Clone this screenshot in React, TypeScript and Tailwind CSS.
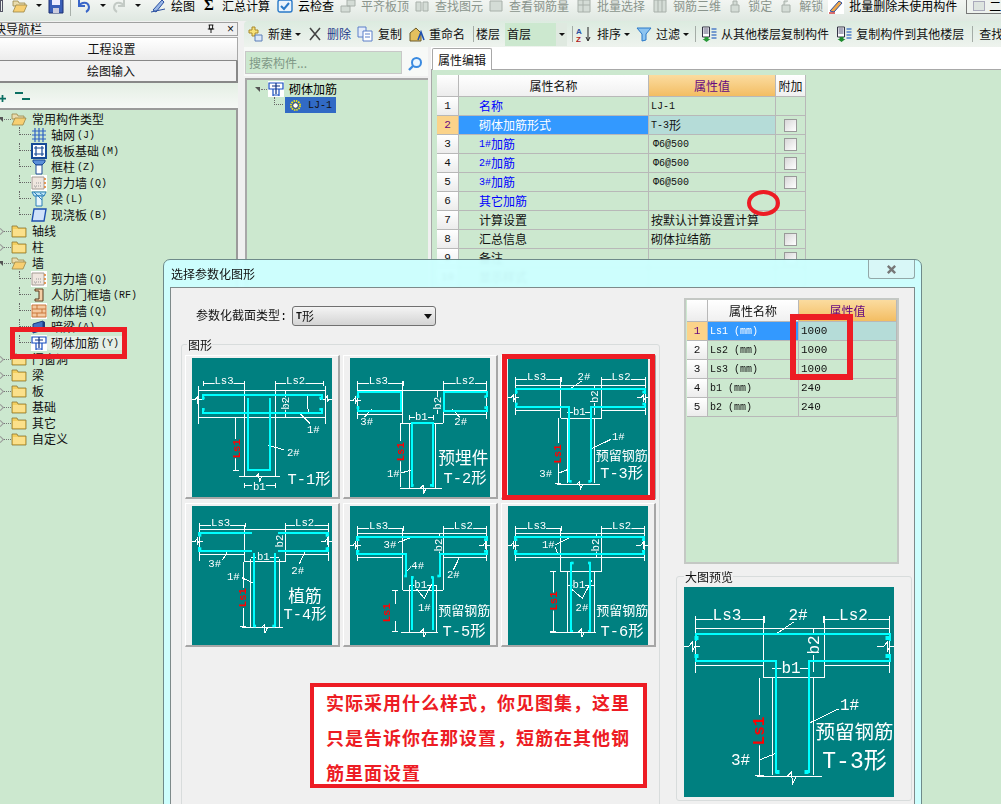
import React from "react";

const GREEN = "bg-[#cce8cf]";

function Mono({ children, className = "" }: { children: React.ReactNode; className?: string }) {
  return <span className={"font-['Liberation_Mono',monospace] text-[10px] " + className}>{children}</span>;
}

/* ---------- engineering diagrams ---------- */
type Txt = { x: number; y: number; s: string; z?: number; rot?: boolean; red?: boolean };
type Dg = { w: string; c: string; h: number[][]; t: Txt[] };

const dim = (a: number, b: number, y: number, cx: number) =>
  `M${a},${y}H${cx - 28}M${cx + 28},${y}H${b}M${a},${y - 7}V${y + 7}M${b},${y - 7}V${y + 7}`;
const brkH = (x: number, y: number) => `M${x - 18},${y}H${x - 4}L${x + 3},${y - 9}V${y + 9}L${x + 8},${y}H${x + 18}`;
const brkV = (x: number, y: number) => `M${x - 9},${y}L${x},${y - 9}L${x + 2},${y + 16}L${x + 9},${y}`;

const BIG = 46;
const MID = 39;
const CJK = 50;
const D: Record<string, Dg> = {
  t1: {
    w:
      dim(34, 157, 76, 96) +
      dim(249, 394, 76, 311) +
      "M19,96H401M19,179H401M19,85V197M401,85V197M157,69V356M249,76V179M249,179V356M281,96V179M141,356H264M157,383H181M223,383H251M157,376V390M251,376V390M131,179V244M131,300V336M122,179H140M122,336H140" +
      "M324,166L354,196M227,261L277,276M345,110L349,165" +
      brkH(14, 124) + brkH(402, 124) + brkV(200, 356),
    c: "M32,125V111H389V125M32,150V164H389V150M167,121V336H234V121",
    h: [[30, 116], [382, 116], [30, 150], [382, 150]],
    t: [
      { x: 96, y: 70, s: "Ls3" }, { x: 311, y: 70, s: "Ls2" },
      { x: 281, y: 136, s: "b2", rot: true }, { x: 202, y: 386, s: "b1" },
      { x: 364, y: 216, s: "1#" }, { x: 304, y: 286, s: "2#" },
      { x: 134, y: 272, s: "Ls1", rot: true, red: true },
      { x: 351, y: 365, s: "T-1形", z: BIG },
    ],
  },
  t2: {
    w:
      dim(23, 160, 76, 85) +
      dim(280, 410, 76, 345) +
      "M23,96H410M23,169H157M280,169H410M23,69V183M410,69V183M157,69V196M280,69V196M150,196H280M178,196V391M257,196V391M150,391H275M178,178H205M235,178H250M178,171V185M250,171V185M152,196V250M152,300V386" +
      "M65,153L40,181M307,153L330,179M148,346L187,336M263,96V120M263,150V169" +
      brkH(14, 126) + brkV(219, 391),
    c: "M23,117V103H153V158H23V145M410,117V103H283V158H410V145M187,386V196H250V386",
    h: [[20, 112], [403, 112], [20, 145], [403, 145], [183, 378], [240, 378]],
    t: [
      { x: 85, y: 70, s: "Ls3" }, { x: 345, y: 70, s: "Ls2" },
      { x: 263, y: 136, s: "b2", rot: true }, { x: 214, y: 178, s: "b1" },
      { x: 50, y: 191, s: "3#" }, { x: 332, y: 191, s: "2#" }, { x: 130, y: 348, s: "1#" },
      { x: 152, y: 281, s: "Ls1", rot: true, red: true },
      { x: 340, y: 303, s: "预埋件", z: CJK }, { x: 345, y: 363, s: "T-2形", z: BIG },
    ],
  },
  t3: {
    w:
      dim(23, 161, 64, 86) +
      dim(279, 411, 64, 339) +
      "M23,83H411M23,156H158M281,156H411M23,57V171M411,57V171M158,57V181M281,57V181M158,181H281M177,181V376M259,181V376M146,379H276M176,163H196M232,163H251M151,181V255M151,310V376M142,376H160M259,83V95M259,135V170" +
      "M181,96L221,69M249,273L309,244M151,346L183,333" +
      brkH(14, 118) + brkH(404, 118) + brkV(215, 379),
    c: "M23,107V93H411V107M23,134V147H183V371M411,134V147H249V371",
    h: [[21, 98], [403, 98], [21, 134], [403, 134], [183, 366], [241, 366]],
    t: [
      { x: 86, y: 58, s: "Ls3" }, { x: 339, y: 58, s: "Ls2" },
      { x: 228, y: 58, s: "2#" }, { x: 261, y: 116, s: "b2", rot: true }, { x: 214, y: 163, s: "b1" },
      { x: 331, y: 238, s: "1#" }, { x: 113, y: 348, s: "3#" },
      { x: 151, y: 288, s: "Ls1", rot: true, red: true },
      { x: 341, y: 294, s: "预留钢筋", z: MID }, { x: 341, y: 349, s: "T-3形", z: BIG },
    ],
  },
  t4: {
    w:
      dim(22, 159, 57, 86) +
      dim(279, 409, 57, 338) +
      "M22,70H409M22,144H157M281,144H409M22,50V165M409,50V165M157,57V167M281,57V167M157,167H281M176,160V365M262,160V365M149,365H274M176,154H193M235,154H262M154,167V245M154,305V362M145,362H163" +
      "M106,137L92,162M339,137L322,174M149,215L186,232" +
      brkH(14, 105) + brkH(404, 105) + brkV(217, 365),
    c: "M22,90V80H180M22,124V135H180M409,90V80H259M409,124V135H259M186,142V362M249,142V362",
    h: [[20, 84], [401, 84], [20, 124], [401, 124], [184, 356], [241, 356]],
    t: [
      { x: 86, y: 51, s: "Ls3" }, { x: 338, y: 51, s: "Ls2" },
      { x: 264, y: 105, s: "b2", rot: true }, { x: 214, y: 154, s: "b1" },
      { x: 68, y: 175, s: "3#" }, { x: 317, y: 195, s: "2#" }, { x: 124, y: 214, s: "1#" },
      { x: 154, y: 275, s: "Ls1", rot: true, red: true },
      { x: 339, y: 273, s: "植筋", z: CJK }, { x: 339, y: 327, s: "T-4形", z: BIG },
    ],
  },
  t5: {
    w:
      dim(22, 160, 67, 86) +
      dim(280, 410, 67, 340) +
      "M22,82H410M22,154H158M280,154H410M22,60V165M410,60V165M158,67V252M280,67V252M158,252H280M178,236V378M260,236V378M153,378H265M178,238H197M232,238H260M135,252V295M135,345V377M126,252H144M126,377H144M267,82V95M267,135V154" +
      "M145,109L185,94M327,157L310,192M198,247L223,277L252,222M172,195L186,178" +
      brkH(14, 117) + brkH(404, 117) + brkV(220, 378),
    c: "M22,106V92H410V106M22,132V145H168V212M410,132V145H270V212M187,212V372M248,212V372",
    h: [[20, 97], [402, 97], [20, 132], [402, 132], [163, 206], [262, 206], [183, 210], [243, 210]],
    t: [
      { x: 86, y: 61, s: "Ls3" }, { x: 340, y: 61, s: "Ls2" },
      { x: 267, y: 117, s: "b2", rot: true }, { x: 120, y: 117, s: "3#" },
      { x: 203, y: 180, s: "4#" }, { x: 310, y: 208, s: "2#" }, { x: 212, y: 238, s: "b1" }, { x: 223, y: 305, s: "1#" },
      { x: 110, y: 320, s: "Ls1", rot: true, red: true },
      { x: 343, y: 315, s: "预留钢筋", z: MID }, { x: 342, y: 377, s: "T-5形", z: BIG },
    ],
  },
  t6: {
    w:
      dim(22, 159, 67, 86) +
      dim(279, 409, 67, 341) +
      "M22,82H409M22,154H409M22,60V165M409,60V165M158,67V197M281,67V197M158,197H281M179,197V378M259,197V378M126,378H265M179,238H197M232,238H259M136,197V260M136,310V375M127,197H145M127,375H145M264,82V95M264,135V154" +
      "M141,117L184,95M141,122L149,142M188,247L223,277L252,222" +
      brkH(14, 117) + brkH(403, 117) + brkV(220, 378),
    c: "M22,106V92H409V106M22,132V145H409V132M189,167V374H196M246,167V374H239",
    h: [[20, 97], [402, 97], [20, 132], [402, 132], [189, 167], [240, 167]],
    t: [
      { x: 86, y: 61, s: "Ls3" }, { x: 341, y: 61, s: "Ls2" },
      { x: 121, y: 117, s: "1#" }, { x: 264, y: 117, s: "b2", rot: true },
      { x: 213, y: 238, s: "b1" }, { x: 222, y: 305, s: "2#" },
      { x: 139, y: 285, s: "Ls1", rot: true, red: true },
      { x: 343, y: 315, s: "预留钢筋", z: MID }, { x: 342, y: 377, s: "T-6形", z: BIG },
    ],
  },
};

function Diagram({ v, w, h }: { v: string; w: number; h: number }) {
  const d = D[v];
  return (
    <svg width={w} height={h} viewBox={`0 0 420 ${h === w ? 420 : 417}`} className="block shrink-0 bg-[#008080] font-['Liberation_Mono','Noto_Sans_CJK_SC',monospace]">
      <path d={d.w} fill="none" stroke="#fff" strokeWidth={1} vectorEffect="non-scaling-stroke" shapeRendering="crispEdges" />
      <path d={d.c} fill="none" stroke="#00ffff" strokeWidth={2} vectorEffect="non-scaling-stroke" shapeRendering="crispEdges" />
      {d.h.map(([x, y], i) => (
        <rect key={i} x={x} y={y} width={8} height={8} fill="#00ffff" />
      ))}
      {d.t.map((t, i) => (
        <text
          key={i}
          x={t.x}
          y={t.y}
          fontSize={t.z ?? 32}
          fontWeight={t.red ? 700 : 400}
          fill={t.red ? "#ff0000" : "#ffffff"}
          stroke="#008080"
          strokeWidth={t.z ? 0 : 6}
          paintOrder="stroke"
          textAnchor="middle"
          dominantBaseline="central"
          transform={t.rot ? `rotate(-90 ${t.x} ${t.y})` : undefined}
        >
          {t.s}
        </text>
      ))}
    </svg>
  );
}

/* ---------- small icons ---------- */
const Svg = ({ children, className = "" }: { children: React.ReactNode; className?: string }) => (
  <svg viewBox="0 0 16 16" className={"block shrink-0 w-4 h-4 " + className}>{children}</svg>
);
const FolderClosed = () => (
  <Svg>
    <path d="M1 3h5l1 2h8v9H1z" fill="#f4cf5e" stroke="#8a7434" strokeWidth="0.8" />
    <path d="M2 6h12v7H2z" fill="#fbe08a" />
  </Svg>
);
const FolderOpen = () => (
  <Svg>
    <path d="M1 3h5l1 2h6v3H1z" fill="#e9dcae" stroke="#9a8546" strokeWidth="0.8" />
    <path d="M1 14l3-7h11l-3 7z" fill="#f7cf72" stroke="#9a8546" strokeWidth="0.8" />
  </Svg>
);
const Grid = () => (
  <Svg><path d="M1 4h14M1 8h14M1 12h14M4 1v14M8 1v14M12 1v14" stroke="#2f62c4" strokeWidth="1.2" /></Svg>
);
const Raft = () => (
  <Svg>
    <path d="M1 1h14v14H1z" fill="#fff" stroke="#164a96" strokeWidth="2" />
    <path d="M5 3v10M11 3v10M3 5h10M3 11h10" stroke="#164a96" strokeWidth="1.2" />
  </Svg>
);
const Col = () => (
  <Svg>
    <path d="M2 1h12v2l-3 3H5L2 3z" fill="#5a8fd8" stroke="#1c4a96" />
    <path d="M5 6h6v9H5z" fill="#fff" stroke="#1c4a96" />
  </Svg>
);
const Wall = () => (
  <Svg className="bg-white">
    <path d="M1 2h12v12H1z" fill="#efe6df" stroke="#a39a92" />
    <path d="M3 11h8M5 8h6M4 12h2" stroke="#999" strokeDasharray="1 1" />
    <path d="M14 3v10" stroke="#e07a1c" strokeDasharray="2 2" strokeWidth="1.4" />
  </Svg>
);
const Beam = () => (
  <Svg>
    <path d="M1 1h14l-2 4H3z" fill="#bfe6f7" stroke="#2a7fb8" />
    <path d="M5 5h6v10H5z" fill="#e8f6fc" stroke="#2a7fb8" />
    <path d="M3 1l8 8M9 2l4 3" stroke="#2a7fb8" />
  </Svg>
);
const Slab = () => (
  <Svg><path d="M3 2h12l-2 12H1z" fill="#cfe2fa" stroke="#1c4fb0" strokeWidth="1.4" /></Svg>
);
const DoorWall = () => (
  <Svg><path d="M4 2h8v12H4v-2h4V4H4z" fill="#f4cfa6" stroke="#5a3a1c" /></Svg>
);
const Brick = () => (
  <Svg className="bg-white">
    <path d="M1 2h14v12H1z" fill="#f4c9a0" stroke="#c8773a" />
    <path d="M1 6h14M1 10h14M6 2v4M11 6v4M6 10v4" stroke="#c8773a" />
  </Svg>
);
const DarkBeam = () => (
  <Svg>
    <path d="M2 5l10-3v9L2 14z" fill="#4472c4" stroke="#1c3a80" />
    <path d="M12 2l2 1v8l-2 0z" fill="#1c3a80" />
  </Svg>
);
const Rebar = () => (
  <Svg className="bg-white">
    <path d="M1 2h14v6H1zM5 8v7M11 8v7M5 14h6" fill="none" stroke="#164fc0" strokeWidth="1.2" />
    <path d="M4 5h8M8 2v11" stroke="#0b2f80" strokeWidth="1.2" />
  </Svg>
);

/* ---------- top toolbar ---------- */
const CARET = <span className="block w-0 h-0 border-x-[3px] border-t-[3px] border-x-transparent border-t-[#111] shrink-0" />;

function TopTool({ icon, label, on, className }: { icon: React.ReactNode; label: string; on?: boolean; className: string }) {
  return (
    <div className={"flex items-center gap-[5px] shrink-0 " + className}>
      {icon}
      <span className={on ? "text-black" : "text-[#8a948c]"}>{label}</span>
    </div>
  );
}

const Dim = ({ d }: { d: string }) => (
  <Svg><path d={d} fill="#d4dcd6" stroke="#a8b0aa" /></Svg>
);

function TopBar() {
  return (
    <div className="h-[21px] shrink-0 overflow-hidden flex items-center bg-gradient-to-b from-[#f2f5f2] to-[#dfe8e1] text-[12px]">
      <div className="-mt-[10px] flex items-center w-full">
        <span className="w-[3px] h-3 border border-[#556] shrink-0" />
        <div className="ml-[9px]"><FolderOpen /></div>
        <span className="ml-[8px]">{CARET}</span>
        <div className="ml-[6px]">
          <Svg><path d="M1 1h14v14H1z" fill="#3b5fb8" stroke="#1c2f70" /><path d="M4 2h8v5H4z" fill="#eef" /><path d="M5 10h6v5H5z" fill="#ccd" /></Svg>
        </div>
        <span className="ml-[6px] w-px h-5 bg-[#a8b0aa] shrink-0" />
        <div className="ml-[5px]"><Svg><path d="M3 2v6h6M3 8c2-4 9-5 10 1 0 2-1 4-3 5" fill="none" stroke="#3a66c8" strokeWidth="2" /></Svg></div>
        <span className="ml-[8px]">{CARET}</span>
        <div className="ml-[5px]"><Svg><path d="M13 2v6H7M13 8C11 4 4 3 3 9c0 2 1 4 3 5" fill="none" stroke="#c3cac5" strokeWidth="2" /></Svg></div>
        <span className="ml-[8px]">{CARET}</span>
        <TopTool className="ml-[9px]" on label="绘图" icon={<Svg><path d="M3 12L12 2l2 2-8 10zM1 14l14-3" fill="#9ab8e8" stroke="#2a4fa0" /></Svg>} />
        <TopTool className="ml-[9px] !gap-[8px]" on label="汇总计算" icon={<span className="font-['Liberation_Serif',serif] text-[15px] font-bold leading-none w-[10px]">Σ</span>} />
        <TopTool className="ml-[7px]" on label="云检查" icon={<Svg><rect x="1" y="2" width="14" height="12" rx="2" fill="#eaf3fc" stroke="#2a79c8" strokeWidth="1.4" /><path d="M4 8l3 3 5-6" fill="none" stroke="#2a79c8" strokeWidth="2" /></Svg>} />
        <TopTool className="ml-[6px]" label="平齐板顶" icon={<Dim d="M1 8h9v6H1zM7 2h8v6H7z" />} />
        <TopTool className="ml-[5px]" label="查找图元" icon={<Dim d="M2 4h5v9H2zM9 4h5v9H9z" />} />
        <TopTool className="ml-[5px]" label="查看钢筋量" icon={<Dim d="M2 3h12v10H2z" />} />
        <TopTool className="ml-[7px]" label="批量选择" icon={<Dim d="M2 2h12v12H2zM2 7h12M7 2v12" />} />
        <TopTool className="ml-[7px]" label="钢筋三维" icon={<Dim d="M2 2h12v12H2zM6 2v12M10 2v12" />} />
        <TopTool className="ml-[6px]" label="锁定" icon={<Dim d="M4 7h8v7H4zM6 7V3h4v4" />} />
        <TopTool className="ml-[6px]" label="解锁" icon={<Dim d="M4 7h8v7H4zM6 7V3h4" />} />
        <TopTool className="ml-[5px]" on label="批量删除未使用构件" icon={<Svg className="bg-white"><path d="M2 13L11 3l3 2-8 9z" fill="#f0a84a" stroke="#2a4fa0" /><path d="M1 15h6" stroke="#c33" strokeWidth="1.4" /></Svg>} />
        <div className="ml-[9px] flex items-center gap-1 border border-[#777] h-[17px] pl-[6px] pr-1 shrink-0 bg-[#eef2ee]">
          <span className="w-[12px] h-[10px] bg-[#dde4df] border border-[#aab]" />
          <span>二</span>
        </div>
      </div>
    </div>
  );
}

/* ---------- left navigation tree ---------- */
function L1({ t, open }: { t: string; open?: boolean }) {
  return (
    <div className="h-4 flex items-center">
      {open ? (
        <span className="w-0 h-0 -ml-[3px] border-l-[5px] border-t-[5px] border-l-transparent border-t-[#555] shrink-0" />
      ) : (
        <span className="w-[5px] h-[5px] -ml-[3px] rotate-45 border-t border-r border-[#999] shrink-0" />
      )}
      <span className="w-[7px] ml-[1px] border-t border-dotted border-[#777]" />
      <span>{open ? <FolderOpen /> : <FolderClosed />}</span>
      <span className="ml-[5px]">{t}</span>
    </div>
  );
}
function L2({ icon, t, k, sel }: { icon: React.ReactNode; t: string; k: string; sel?: boolean }) {
  return (
    <div className="h-4 flex items-center">
      <span className="ml-[18px] w-[12px] h-[8px] self-start border-l border-b border-dotted border-[#666] shrink-0" />
      <span>{icon}</span>
      <span className={"pl-[4px] pr-[6px] h-[14px] flex items-center rounded-[2px] " + (sel ? "bg-[#e6efe6]" : "")}>
        {t}
        <Mono className="ml-[2px]">({k})</Mono>
      </span>
    </div>
  );
}

function LeftNav() {
  return (
    <div className="w-[238px] shrink-0 flex flex-col bg-[#f0f0f0] text-[12px] text-[#111] font-normal">
      <div className="h-[14px] mt-px border border-[#a0a0a0] border-l-0 flex items-center bg-[#f0f0f0]">
        <span className="-ml-[6px]">快导航栏</span>
        <svg viewBox="0 0 10 12" className="block ml-auto mr-[12px] w-[8px] h-[10px]"><path d="M2 1h6M3 1v5h4V1M1 6h8M5 6v5" fill="none" stroke="#111" strokeWidth="1.2" /></svg>
        <span className="mr-[3px] font-['Liberation_Sans',sans-serif] text-[12px] leading-none">×</span>
      </div>
      <div className="h-[24px] mt-[1px] border border-[#a8a8a8] border-l-0 border-b-[#888] flex items-center justify-center pr-[14px] bg-gradient-to-b from-white to-[#ececec]">工程设置</div>
      <div className="h-[22px] border-r-2 border-b-2 border-[#888] flex items-center justify-center pr-[14px] bg-[#f2f2f2]">绘图输入</div>
      <div className="h-[25px] flex items-center bg-gradient-to-b from-[#e4efe4] to-[#f6f8f6]">
        <svg viewBox="0 0 8 8" className="block -ml-px mt-[6px] w-[7px] h-[7px] shrink-0"><path d="M4 0v8M0 4h8" stroke="#0b6f62" strokeWidth="2" /></svg>
        <span className="ml-[9px] flex flex-col gap-[4px] mt-[1px]">
          <span className="block w-[8px] h-[2px] bg-[#0b6f62]" />
          <span className="block ml-[7px] w-[8px] h-[2px] bg-[#0b6f62]" />
        </span>
      </div>
      <div className={"flex-1 pt-px pl-[1px] border-t-2 border-r-2 border-[#9a9a9a] " + GREEN}>
        <L1 t="常用构件类型" open />
        <L2 icon={<Grid />} t="轴网" k="J" />
        <L2 icon={<Raft />} t="筏板基础" k="M" />
        <L2 icon={<Col />} t="框柱" k="Z" />
        <L2 icon={<Wall />} t="剪力墙" k="Q" />
        <L2 icon={<Beam />} t="梁" k="L" />
        <L2 icon={<Slab />} t="现浇板" k="B" />
        <L1 t="轴线" />
        <L1 t="柱" />
        <L1 t="墙" open />
        <L2 icon={<Wall />} t="剪力墙" k="Q" />
        <L2 icon={<DoorWall />} t="人防门框墙" k="RF" />
        <L2 icon={<Brick />} t="砌体墙" k="Q" />
        <L2 icon={<DarkBeam />} t="暗梁" k="A" />
        <L2 icon={<Rebar />} t="砌体加筋" k="Y" sel />
        <L1 t="门窗洞" />
        <L1 t="梁" />
        <L1 t="板" />
        <L1 t="基础" />
        <L1 t="其它" />
        <L1 t="自定义" />
      </div>
    </div>
  );
}

/* ---------- second toolbar ---------- */
const Sep = ({ className = "" }: { className?: string }) => <span className={"w-px h-[16px] bg-[#a4aca6] shrink-0 " + className} />;

function CopyFloors({ arrow }: { arrow: string }) {
  return (
    <Svg className="!w-[17px]">
      <path d="M1 1h7v10H1z" fill="#fff" stroke="#334" />
      <path d="M2 3h5M2 5h5M2 7h5" stroke="#557" />
      <path d="M10 3h5M10 6h5M10 9h5M10 12h5" stroke="#4f7fc8" strokeWidth="1.4" />
      <path d="M3 11h4v2h2l-4 3-4-3h2z" fill={arrow} />
    </Svg>
  );
}

function Toolbar2() {
  return (
    <div className="h-[26px] flex items-center rounded-tl-[4px] bg-gradient-to-b from-[#dcebe0] to-[#eef3ee] text-[12px] text-[#111] whitespace-nowrap overflow-hidden">
      <div className="ml-[3px]">
        <Svg><path d="M5 1h3v3h3v3H8v3H5V7H2V4h3z" fill="#f7e27a" stroke="#a8882a" /><path d="M8 9h7v6H8z" fill="#dbe8f8" stroke="#5a7fb8" /></Svg>
      </div>
      <span className="ml-[5px]">新建</span>
      <span className="ml-[3px]">{CARET}</span>
      <div className="ml-[6px]"><Svg><path d="M3 2l10 12M13 2L3 14" stroke="#444" strokeWidth="1.6" /></Svg></div>
      <span className="ml-[4px] text-[#1d3a8a]">删除</span>
      <div className="ml-[6px]"><Svg><path d="M1 1h8v10H1z" fill="#e4ecfa" stroke="#5a7fc8" /><path d="M6 5h9v10H6z" fill="#fff" stroke="#5a7fc8" /><path d="M8 8h5M8 11h5" stroke="#5a7fc8" /></Svg></div>
      <span className="ml-[5px]">复制</span>
      <div className="ml-[7px]"><Svg><path d="M1 7l6-5 5 5v8H1z" fill="#e4c05e" stroke="#6a5a2a" /><path d="M9 14l3-8 3 8" fill="none" stroke="#1c4fb0" strokeWidth="1.6" /></Svg></div>
      <span className="ml-[4px]">重命名</span>
      <Sep className="ml-[8px]" />
      <span className="ml-[2px]">楼层</span>
      <div className={"ml-[5px] w-[62px] h-[23px] flex items-center pl-[2px] shrink-0 " + GREEN}>
        首层
        <span className="ml-auto w-[11px] h-full flex items-center justify-center bg-[#dfe9e0]">{CARET}</span>
      </div>
      <Sep className="ml-[5px]" />
      <div className="ml-[3px]">
        <Svg><text x="0" y="7.5" fontSize="8" fill="#2a4fa0" fontFamily="Liberation Sans" fontWeight="700">A</text><text x="0" y="15.5" fontSize="8" fill="#b02020" fontFamily="Liberation Sans" fontWeight="700">Z</text><path d="M12 1v13M10 11l2 4 2-4" fill="none" stroke="#222" /></Svg>
      </div>
      <span className="ml-[5px]">排序</span>
      <span className="ml-[3px]">{CARET}</span>
      <div className="ml-[6px]"><Svg><path d="M1 2h14L10 8v6l-4 1V8z" fill="#8dc4f0" stroke="#2a79c8" /></Svg></div>
      <span className="ml-[4px]">过滤</span>
      <span className="ml-[3px]">{CARET}</span>
      <Sep className="ml-[6px]" />
      <div className="ml-[5px]"><CopyFloors arrow="#2a9a3a" /></div>
      <span className="ml-[3px]">从其他楼层复制构件</span>
      <div className="ml-[7px]"><CopyFloors arrow="#1f8a2f" /></div>
      <span className="ml-[3px]">复制构件到其他楼层</span>
      <Sep className="ml-[8px]" />
      <span className="ml-[6px]">查找</span>
    </div>
  );
}

/* ---------- search + component tree ---------- */
function MidPane() {
  return (
    <div className="w-[184px] shrink-0 flex flex-col text-[12px]">
      <div className="h-[29px] pt-[4px] flex bg-[#f7f9f7]">
        <div className={"w-[157px] h-[23px] ml-px border border-[#c8c8c8] flex items-center pl-[3px] text-[#7f9886] " + GREEN}>搜索构件...</div>
        <div className="flex-1 flex items-center justify-center">
          <Svg><circle cx="9.5" cy="6.5" r="4.5" fill="#eaf6ff" stroke="#3a8ae0" strokeWidth="2" /><path d="M6 10l-4 4" stroke="#3a8ae0" strokeWidth="2.4" /></Svg>
        </div>
      </div>
      <div className={"flex-1 mt-[2px] ml-px border-t-2 border-l-2 border-[#a8a8a8] pl-[8px] pt-[1px] " + GREEN}>
        <div className="h-4 flex items-center">
          <span className="w-0 h-0 border-l-[5px] border-t-[5px] border-l-transparent border-t-[#555]" />
          <span className="w-[6px] ml-px border-t border-dotted border-[#777]" />
          <span className="ml-px"><Rebar /></span>
          <span className="ml-[5px]">砌体加筋</span>
        </div>
        <div className="h-4 flex items-center">
          <span className="ml-[19px] w-[9px] h-[8px] self-start border-l border-b border-dotted border-[#666]" />
          <div className="ml-[2px] w-[51px] h-[16px] flex items-center bg-[#316ac5]">
            <span className="ml-[5px]">
              <svg viewBox="0 0 12 12" className="block w-[11px] h-[11px]"><circle cx="6" cy="6" r="3" fill="#fff" stroke="#443" /><circle cx="6" cy="6" r="5" fill="none" stroke="#ffee00" strokeWidth="1.8" strokeDasharray="1.6 1" /></svg>
            </span>
            <Mono className="ml-[7px] text-[#111]">LJ-1</Mono>
          </div>
        </div>
      </div>
    </div>
  );
}

/* ---------- property tables ---------- */
const CB = () => <span className="block w-[13px] h-[13px] border border-[#999] bg-gradient-to-br from-[#d8d8d8] to-white" />;
const CELL = "h-full flex items-center border-r border-b border-[#b8b8b8] shrink-0";
const NUM = "bg-gradient-to-b from-white to-[#ececec]";
const VALHEAD = "bg-gradient-to-b from-[#fbdc9f] to-[#f3bd62] text-[#660a80]";

type Row = { n: number; name: React.ReactNode; val?: React.ReactNode; cb?: boolean; blue?: boolean; sel?: boolean };
const PROPS: Row[] = [
  { n: 1, name: "名称", val: <Mono>LJ-1</Mono>, blue: true },
  { n: 2, name: "砌体加筋形式", val: <><Mono>T-3</Mono>形</>, cb: true, sel: true },
  { n: 3, name: <><Mono>1#</Mono>加筋</>, val: <Mono className="ml-[2px]">Φ6@500</Mono>, cb: true, blue: true },
  { n: 4, name: <><Mono>2#</Mono>加筋</>, val: <Mono className="ml-[2px]">Φ6@500</Mono>, cb: true, blue: true },
  { n: 5, name: <><Mono>3#</Mono>加筋</>, val: <Mono className="ml-[2px]">Φ6@500</Mono>, cb: true, blue: true },
  { n: 6, name: "其它加筋", blue: true },
  { n: 7, name: "计算设置", val: "按默认计算设置计算" },
  { n: 8, name: "汇总信息", val: "砌体拉结筋", cb: true },
  { n: 9, name: "备注", cb: true },
  { n: 10, name: "显示样式" },
];

function PropPane() {
  return (
    <div className="flex-1 min-w-0 ml-[3px] flex flex-col text-[12px] text-[#111] bg-white">
      <div className="h-[23px] flex items-end border-b border-[#a8a8a8]">
        <div className="ml-px w-[60px] h-[22px] -mb-px bg-white border border-b-0 border-[#a8a8a8] rounded-t-[2px] flex items-center justify-center">属性编辑</div>
      </div>
      <div className={"flex-1 pl-[5px] pt-[5px] border-l border-[#a8a8a8] " + GREEN}>
        <div className="h-[22px] flex">
          <div className={CELL + " w-[22px] " + NUM} />
          <div className={CELL + " w-[190px] justify-center bg-gradient-to-b from-white to-[#f0f0f0]"}>属性名称</div>
          <div className={CELL + " w-[127px] justify-center " + VALHEAD}>属性值</div>
          <div className={CELL + " w-[30px] justify-center bg-gradient-to-b from-white to-[#f0f0f0]"}>附加</div>
        </div>
        {PROPS.map((r) => (
          <div key={r.n} className="h-[19px] flex">
            <div className={CELL + " w-[22px] justify-center " + (r.sel ? "bg-[#fbd38a] text-[#660a80]" : NUM)}><Mono className="text-[11px]">{r.n}</Mono></div>
            <div className={CELL + " w-[190px] pl-[20px] " + (r.sel ? "bg-[#3399ff] text-white" : r.blue ? "text-[#0000ff]" : "")}>{r.name}</div>
            <div className={CELL + " w-[127px] pl-[2px] " + (r.sel ? "bg-[#b5dcd8]" : "")}>{r.val}</div>
            <div className={CELL + " w-[30px] justify-center"}>{r.cb && <CB />}</div>
          </div>
        ))}
      </div>
    </div>
  );
}

const PARAMS = [
  ["Ls1", "1000"],
  ["Ls2", "1000"],
  ["Ls3", "1000"],
  ["b1", "240"],
  ["b2", "240"],
];

/* ---------- dialog ---------- */
function Card({ v, sel }: { v: string; sel?: boolean }) {
  return (
    <div className="w-[155px] h-[144px] shrink-0 pl-[6px] pt-[2px] relative bg-[#f0f0f0] border-t border-l border-white border-r-2 border-b-2 border-r-[#a6a6a6] border-b-[#a6a6a6]">
      <Diagram v={v} w={140} h={139} />
      {sel && <div className="absolute left-0 -top-[2px] w-[153px] h-[146px] border-[5px] border-[#ed1c24]" />}
    </div>
  );
}

function Dialog() {
  return (
    <div className="absolute left-[163px] top-[259px] w-[759px] h-[560px] rounded-t-[7px] border border-[#6e8a8a] bg-[#ccffff]/95 backdrop-blur-[1.5px] text-[12px] text-[#111]">
      <div className="h-[27px] flex items-start">
        <span className="ml-[7px] mt-[5px]">选择参数化图形</span>
        <div className="ml-auto mr-[6px] w-[47px] h-[19px] border border-t-0 border-[#93a8a8] rounded-b-[3px] flex items-center justify-center bg-[#d8f7f7]">
          <svg viewBox="0 0 12 12" className="block w-[11px] h-[11px]"><path d="M2 2l8 8M10 2l-8 8" stroke="#777" strokeWidth="2.6" /></svg>
        </div>
      </div>
      <div className="mx-[6px] h-[530px] bg-[#f0f0f0] border border-[#7d8a8a] flex">
        <div className="w-[506px] shrink-0">
          <div className="mt-[18px] ml-[25px] h-[20px] flex items-center">
            <span className="w-[96px]">参数化截面类型<span className="font-['Liberation_Mono',monospace]">:</span></span>
            <div className="w-[144px] h-[20px] rounded-[3px] border border-[#707070] bg-gradient-to-b from-[#f4f4f4] to-[#d4d4d4] flex items-center pl-[3px]">
              <Mono className="font-bold">T</Mono>形
              <span className="ml-auto mr-[3px] w-0 h-0 border-x-[4px] border-t-[5px] border-x-transparent border-t-[#111]" />
            </div>
          </div>
          <fieldset className="mt-[11px] ml-[10px] w-[479px] h-[470px] pl-[3px] border border-[#d8dcdc] rounded-[3px]">
            <legend className="ml-[2px] h-[15px] leading-[15px] text-[12px] pl-px">图形</legend>
            <div className="pt-[3px] flex flex-col gap-[4px]">
              <div className="flex gap-[3px]">
                <Card v="t1" />
                <Card v="t2" />
                <Card v="t3" sel />
              </div>
              <div className="flex gap-[3px]">
                <Card v="t4" />
                <Card v="t5" />
                <Card v="t6" />
              </div>
            </div>
          </fieldset>
        </div>
        <div className="flex-1 min-w-0">
          <div className={"mt-[10px] ml-[7px] w-[215px] h-[266px] border-2 border-[#c4c8c4] pl-px " + GREEN}>
            <div className="h-[22px] flex">
              <div className={CELL + " w-[21px] " + NUM} />
              <div className={CELL + " w-[91px] justify-center bg-gradient-to-b from-white to-[#f0f0f0]"}>属性名称</div>
              <div className={CELL + " w-[98px] justify-center " + VALHEAD}>属性值</div>
            </div>
            {PARAMS.map((p, i) => (
              <div key={p[0]} className="h-[19px] flex">
                <div className={CELL + " w-[21px] justify-center " + (i === 0 ? "bg-[#fbd38a] text-[#660a80]" : NUM)}><Mono className="text-[11px]">{i + 1}</Mono></div>
                <div className={CELL + " w-[91px] pl-[2px] " + (i === 0 ? "bg-[#3399ff] text-white" : "")}><Mono>{p[0]} (mm)</Mono></div>
                <div className={CELL + " w-[98px] pl-[2px] " + (i === 0 ? "bg-[#b5dcd8]" : "")}><Mono className="text-[11px]">{p[1]}</Mono></div>
              </div>
            ))}
          </div>
          <fieldset className="mt-[5px] -ml-px w-[236px] h-[232px] pl-[7px] border border-[#d8dcdc] rounded-[3px]">
            <legend className="h-[15px] leading-[15px] text-[12px] pl-px">大图预览</legend>
            <div className="pt-[3px]">
              <Diagram v="t3" w={210} h={210} />
            </div>
          </fieldset>
        </div>
      </div>
    </div>
  );
}

export default function App() {
  return (
    <div className="relative w-[1001px] h-[804px] overflow-hidden bg-[#f0f0f0] flex flex-col font-['Noto_Sans_CJK_SC',sans-serif] text-[12px]">
      <TopBar />
      <div className="flex-1 min-h-0 flex">
        <LeftNav />
        <div className="ml-[6px] flex-1 min-w-0 flex flex-col">
          <Toolbar2 />
          <div className="flex-1 min-h-0 flex">
            <MidPane />
            <PropPane />
          </div>
        </div>
      </div>

      <Dialog />

      {/* annotations drawn over the screenshot */}
      <div className="absolute left-[10px] top-[327px] w-[117px] h-[32px] border-[5px] border-[#ed1c24]" />
      <div className="absolute left-[747px] top-[190px] w-[33px] h-[26px] rounded-[50%] border-[4px] border-[#ed1c24]" />
      <div className="absolute left-[790px] top-[314px] w-[63px] h-[66px] border-[6px] border-[#ed1c24]" />
      <div className="absolute left-[310px] top-[683px] w-[337px] h-[105px] bg-white border-[4px] border-[#ed1c24] pl-[12px] text-[#ed1c24] text-[18px] font-bold leading-[35px] tracking-[1px] whitespace-nowrap">
        <div className="-mt-[2px]">实际采用什么样式，你见图集，这里</div>
        <div>只是告诉你在那设置，短筋在其他钢</div>
        <div>筋里面设置</div>
      </div>
    </div>
  );
}
